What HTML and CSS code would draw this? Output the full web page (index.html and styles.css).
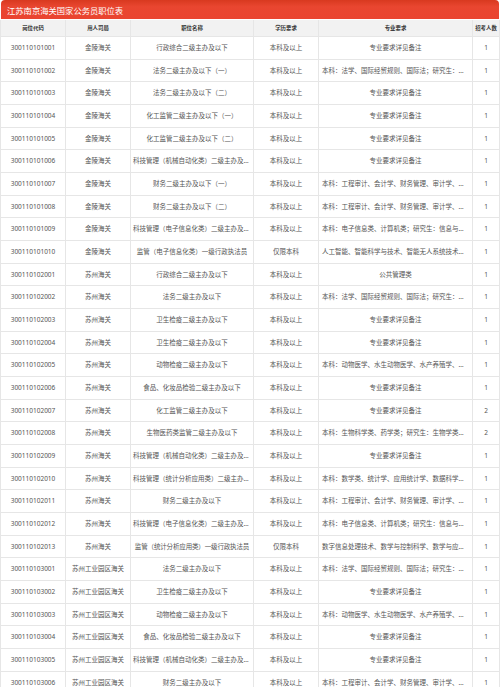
FILE: index.html
```html
<!DOCTYPE html>
<html lang="zh">
<head>
<meta charset="utf-8">
<title>江苏南京海关国家公务员职位表</title>
<link rel="stylesheet" href="styles.css">
</head>
<body>
<div class="page">
  <div class="title">江苏南京海关国家公务员职位表</div>
  <div class="table">
    <div class="row head">
      <div class="c">岗位代码</div><div class="c">用人司局</div><div class="c">职位名称</div><div class="c">学历要求</div><div class="c">专业要求</div><div class="c">招考人数</div>
    </div>
    <div class="row"><div class="c">300110101001</div><div class="c">金陵海关</div><div class="c">行政综合二级主办及以下</div><div class="c">本科及以上</div><div class="c">专业要求详见备注</div><div class="c">1</div></div>
    <div class="row"><div class="c">300110101002</div><div class="c">金陵海关</div><div class="c">法务二级主办及以下（一）</div><div class="c">本科及以上</div><div class="c">本科：法学、国际经贸规则、国际法；研究生：法学（国际法学）</div><div class="c">1</div></div>
    <div class="row"><div class="c">300110101003</div><div class="c">金陵海关</div><div class="c">法务二级主办及以下（二）</div><div class="c">本科及以上</div><div class="c">专业要求详见备注</div><div class="c">1</div></div>
    <div class="row"><div class="c">300110101004</div><div class="c">金陵海关</div><div class="c">化工监管二级主办及以下（一）</div><div class="c">本科及以上</div><div class="c">专业要求详见备注</div><div class="c">1</div></div>
    <div class="row"><div class="c">300110101005</div><div class="c">金陵海关</div><div class="c">化工监管二级主办及以下（二）</div><div class="c">本科及以上</div><div class="c">专业要求详见备注</div><div class="c">1</div></div>
    <div class="row"><div class="c">300110101006</div><div class="c">金陵海关</div><div class="c">科技管理（机械自动化类）二级主办及以下</div><div class="c">本科及以上</div><div class="c">专业要求详见备注</div><div class="c">1</div></div>
    <div class="row"><div class="c">300110101007</div><div class="c">金陵海关</div><div class="c">财务二级主办及以下（一）</div><div class="c">本科及以上</div><div class="c">本科：工程审计、会计学、财务管理、审计学、财政学</div><div class="c">1</div></div>
    <div class="row"><div class="c">300110101008</div><div class="c">金陵海关</div><div class="c">财务二级主办及以下（二）</div><div class="c">本科及以上</div><div class="c">本科：工程审计、会计学、财务管理、审计学、财政学</div><div class="c">1</div></div>
    <div class="row"><div class="c">300110101009</div><div class="c">金陵海关</div><div class="c">科技管理（电子信息化类）二级主办及以下</div><div class="c">本科及以上</div><div class="c">本科：电子信息类、计算机类；研究生：信息与通信工程</div><div class="c">1</div></div>
    <div class="row"><div class="c">300110101010</div><div class="c">金陵海关</div><div class="c">监管（电子信息化类）一级行政执法员</div><div class="c">仅限本科</div><div class="c">人工智能、智能科学与技术、智能无人系统技术、数据科学</div><div class="c">1</div></div>
    <div class="row"><div class="c">300110102001</div><div class="c">苏州海关</div><div class="c">行政综合二级主办及以下</div><div class="c">本科及以上</div><div class="c">公共管理类</div><div class="c">1</div></div>
    <div class="row"><div class="c">300110102002</div><div class="c">苏州海关</div><div class="c">法务二级主办及以下</div><div class="c">本科及以上</div><div class="c">本科：法学、国际经贸规则、国际法；研究生：法学（国际法学）</div><div class="c">1</div></div>
    <div class="row"><div class="c">300110102003</div><div class="c">苏州海关</div><div class="c">卫生检疫二级主办及以下</div><div class="c">本科及以上</div><div class="c">专业要求详见备注</div><div class="c">1</div></div>
    <div class="row"><div class="c">300110102004</div><div class="c">苏州海关</div><div class="c">卫生检疫二级主办及以下</div><div class="c">本科及以上</div><div class="c">专业要求详见备注</div><div class="c">1</div></div>
    <div class="row"><div class="c">300110102005</div><div class="c">苏州海关</div><div class="c">动物检疫二级主办及以下</div><div class="c">本科及以上</div><div class="c">本科：动物医学、水生动物医学、水产养殖学、动物科学</div><div class="c">1</div></div>
    <div class="row"><div class="c">300110102006</div><div class="c">苏州海关</div><div class="c">食品、化妆品检验二级主办及以下</div><div class="c">本科及以上</div><div class="c">专业要求详见备注</div><div class="c">1</div></div>
    <div class="row"><div class="c">300110102007</div><div class="c">苏州海关</div><div class="c">化工监管二级主办及以下</div><div class="c">本科及以上</div><div class="c">专业要求详见备注</div><div class="c">2</div></div>
    <div class="row"><div class="c">300110102008</div><div class="c">苏州海关</div><div class="c">生物医药类监管二级主办及以下</div><div class="c">本科及以上</div><div class="c">本科：生物科学类、药学类；研究生：生物学类、药学类</div><div class="c">2</div></div>
    <div class="row"><div class="c">300110102009</div><div class="c">苏州海关</div><div class="c">科技管理（机械自动化类）二级主办及以下</div><div class="c">本科及以上</div><div class="c">专业要求详见备注</div><div class="c">1</div></div>
    <div class="row"><div class="c">300110102010</div><div class="c">苏州海关</div><div class="c">科技管理（统计分析应用类）二级主办及以下</div><div class="c">本科及以上</div><div class="c">本科：数学类、统计学、应用统计学、数据科学与大数据技术</div><div class="c">1</div></div>
    <div class="row"><div class="c">300110102011</div><div class="c">苏州海关</div><div class="c">财务二级主办及以下</div><div class="c">本科及以上</div><div class="c">本科：工程审计、会计学、财务管理、审计学、财政学</div><div class="c">1</div></div>
    <div class="row"><div class="c">300110102012</div><div class="c">苏州海关</div><div class="c">科技管理（电子信息化类）二级主办及以下</div><div class="c">本科及以上</div><div class="c">本科：电子信息类、计算机类；研究生：信息与通信工程</div><div class="c">1</div></div>
    <div class="row"><div class="c">300110102013</div><div class="c">苏州海关</div><div class="c fit">监管（统计分析应用类）一级行政执法员</div><div class="c">仅限本科</div><div class="c">数字信息处理技术、数学与控制科学、数学与应用数学</div><div class="c">1</div></div>
    <div class="row"><div class="c">300110103001</div><div class="c">苏州工业园区海关</div><div class="c">法务二级主办及以下</div><div class="c">本科及以上</div><div class="c">本科：法学、国际经贸规则、国际法；研究生：法学（国际法学）</div><div class="c">1</div></div>
    <div class="row"><div class="c">300110103002</div><div class="c">苏州工业园区海关</div><div class="c">卫生检疫二级主办及以下</div><div class="c">本科及以上</div><div class="c">专业要求详见备注</div><div class="c">1</div></div>
    <div class="row"><div class="c">300110103003</div><div class="c">苏州工业园区海关</div><div class="c">动物检疫二级主办及以下</div><div class="c">本科及以上</div><div class="c">本科：动物医学、水生动物医学、水产养殖学、动物科学</div><div class="c">1</div></div>
    <div class="row"><div class="c">300110103004</div><div class="c">苏州工业园区海关</div><div class="c">食品、化妆品检验二级主办及以下</div><div class="c">本科及以上</div><div class="c">专业要求详见备注</div><div class="c">1</div></div>
    <div class="row"><div class="c">300110103005</div><div class="c">苏州工业园区海关</div><div class="c">科技管理（机械自动化类）二级主办及以下</div><div class="c">本科及以上</div><div class="c">专业要求详见备注</div><div class="c">1</div></div>
    <div class="row"><div class="c">300110103006</div><div class="c">苏州工业园区海关</div><div class="c">财务二级主办及以下</div><div class="c">本科及以上</div><div class="c">本科：工程审计、会计学、财务管理、审计学、财政学</div><div class="c">1</div></div>
  </div>
</div>
</body>
</html>
```
FILE: styles.css
```css
html, body {
  margin: 0;
  padding: 0;
  background: #ffffff;
}
body {
  font-family: "Noto Sans", "Noto Sans CJK SC", sans-serif;
  color: #555555;
}
.page {
  width: 500px;
}
.title {
  height: 19px;
  margin: 0 1px 1px 1px;
  padding-left: 6px;
  display: flex;
  align-items: center;
  color: #ffffff;
  font-size: 8.3px;
  background: linear-gradient(to bottom, #d8391f 0%, #e94630 35%, #ea4430 100%);
  border-radius: 4px 4px 0 0;
}
.table {
  border-left: 1px solid #e6e6e6;
}
.row {
  display: grid;
  grid-template-columns: 65px 65px 123px 65px 154px 27px;
  height: 22.68px;
  box-sizing: border-box;
  border-bottom: 1px solid #e6e6e6;
}
.row.head {
  height: 17px;
  background: #f2f2f2;
  color: #333333;
  font-weight: bold;
}
.c {
  display: flex;
  align-items: center;
  justify-content: center;
  border-right: 1px solid #e6e6e6;
  font-size: 6.5px;
  white-space: nowrap;
  overflow: hidden;
  min-width: 0;
  padding: 0 3px;
}
.row:not(.head) .c {
  display: block;
  line-height: 21.68px;
  text-align: center;
  text-overflow: ellipsis;
}
.row:not(.head) .c:nth-child(3) {
  padding: 0 2px;
}
.row.head .c {
  font-size: 5.4px;
}
.row:not(.head) .c.fit {
  text-overflow: clip;
  padding: 0 1px;
  letter-spacing: -0.15px;
}
```
